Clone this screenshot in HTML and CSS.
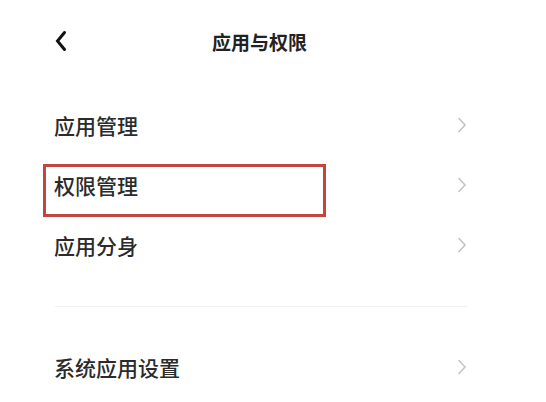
FILE: index.html
```html
<!DOCTYPE html>
<html lang="zh-CN">
<head>
<meta charset="utf-8">
<title>应用与权限</title>
<link rel="stylesheet" href="styles.css">
</head>
<body>
<div class="page">
  <header class="header">
    <svg class="back" width="12" height="22" viewBox="0 0 12 22">
      <path d="M9.5 2.5 L2.5 11 L9.5 19.5" fill="none" stroke="#111" stroke-width="3" stroke-linecap="round" stroke-linejoin="miter"/>
    </svg>
    <h1 class="title">应用与权限</h1>
  </header>
  <ul class="list">
    <li class="row"><span class="label">应用管理</span><svg class="arrow" width="10" height="16" viewBox="0 0 10 16"><path d="M2 1.5 L8 8 L2 14.5" fill="none" stroke="#c4c4c4" stroke-width="1.6" stroke-linecap="round"/></svg></li>
    <li class="row row-marked"><span class="label">权限管理</span><svg class="arrow" width="10" height="16" viewBox="0 0 10 16"><path d="M2 1.5 L8 8 L2 14.5" fill="none" stroke="#c4c4c4" stroke-width="1.6" stroke-linecap="round"/></svg><span class="mark"></span></li>
    <li class="row"><span class="label">应用分身</span><svg class="arrow" width="10" height="16" viewBox="0 0 10 16"><path d="M2 1.5 L8 8 L2 14.5" fill="none" stroke="#c4c4c4" stroke-width="1.6" stroke-linecap="round"/></svg></li>
  </ul>
  <div class="divider"></div>
  <ul class="list">
    <li class="row"><span class="label">系统应用设置</span><svg class="arrow" width="10" height="16" viewBox="0 0 10 16"><path d="M2 1.5 L8 8 L2 14.5" fill="none" stroke="#c4c4c4" stroke-width="1.6" stroke-linecap="round"/></svg></li>
  </ul>
</div>
</body>
</html>
```
FILE: styles.css
```css
* { box-sizing: border-box; }
html, body {
  margin: 0;
  padding: 0;
  background: #fff;
}
body {
  font-family: "Noto Sans CJK SC", "Noto Sans", sans-serif;
  color: #2a2a2a;
  width: 546px;
  height: 402px;
  overflow: hidden;
}
.page {
  display: flex;
  flex-direction: column;
}
.header {
  display: flex;
  align-items: center;
  height: 38px;
  margin-top: 22px;
  padding-left: 55px;
}
.back {
  display: block;
  flex: none;
}
.title {
  margin: 0 0 0 145px;
  font-size: 19px;
  font-weight: 700;
  color: #222;
  line-height: 1;
}
.list {
  list-style: none;
  margin: 0;
  padding: 0;
}
.header + .list {
  margin-top: 35px;
}
.row {
  position: relative;
  display: flex;
  align-items: center;
  justify-content: space-between;
  height: 60px;
  padding: 0 79px 0 54px;
}
.label {
  font-size: 21px;
  font-weight: 500;
  line-height: 1;
  color: #2b2b2b;
}
.arrow {
  display: block;
  flex: none;
}
.row-marked .mark {
  position: absolute;
  left: 43px;
  top: 9px;
  width: 283px;
  height: 53px;
  border: 3px solid #c2463f;
}
.divider {
  height: 1px;
  background: #efefef;
  margin: 31px 79px 30px 55px;
}
```
